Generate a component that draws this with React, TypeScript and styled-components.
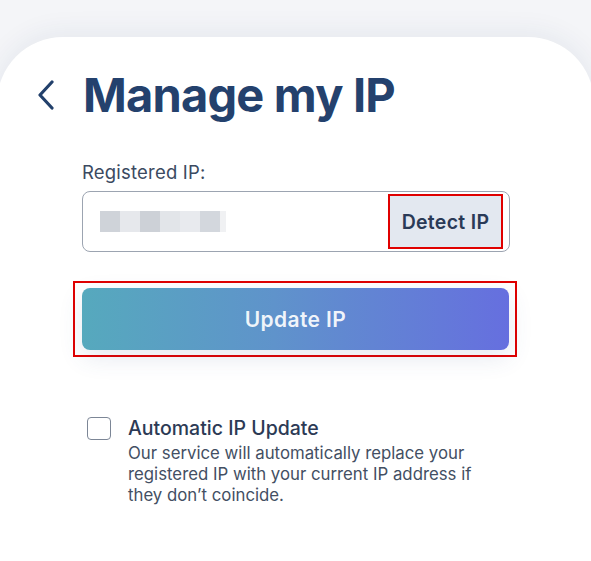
import styled, { createGlobalStyle } from "styled-components";

const GlobalStyle = createGlobalStyle`
  html, body {
    margin: 0;
    padding: 0;
    background: #f4f5f8;
    font-family: Inter, "Noto Sans", "Liberation Sans", sans-serif;
    overflow: hidden;
  }
  * {
    box-sizing: border-box;
  }
`;

const App = () => {
  return (
    <>
      <GlobalStyle />
      <Card>
        <Header>
          <BackButton aria-label="back">
            <svg width="18" height="30" viewBox="0 0 18 30" fill="none">
              <path d="M15 2 L3 15 L15 28" stroke="#22406b" strokeWidth="3.2" strokeLinecap="round" strokeLinejoin="round" />
            </svg>
          </BackButton>
          <Title>Manage my IP</Title>
        </Header>

        <Content>
          <Label>Registered IP:</Label>
          <InputBox>
            <Blurred>
              <Pixel shade="#cfd3d9" />
              <Pixel shade="#e6e8ec" />
              <Pixel shade="#cdd1d7" />
              <Pixel shade="#e2e5e9" />
              <Pixel shade="#e8eaee" />
              <Pixel shade="#d3d7dd" />
              <Pixel shade="#f0f1f3" small />
            </Blurred>
            <DetectButton>Detect IP</DetectButton>
          </InputBox>

          <UpdateFrame>
            <UpdateButton>Update IP</UpdateButton>
          </UpdateFrame>

          <AutoRow>
            <Checkbox />
            <AutoText>
              <AutoTitle>Automatic IP Update</AutoTitle>
              <AutoDesc>
                Our service will automatically replace your registered IP with your current IP address if they don’t coincide.
              </AutoDesc>
            </AutoText>
          </AutoRow>
        </Content>
      </Card>
    </>
  );
};

export default App;

const Card = styled.div`
  margin: 37px -3px 0;
  height: 524px;
  background: #ffffff;
  border-radius: 66px 66px 0 0;
  box-shadow: 0 -4px 28px rgba(30, 50, 100, 0.07);
  padding-top: 27px;
`;

const Header = styled.div`
  display: flex;
  align-items: center;
  gap: 28px;
  padding-left: 40px;
  height: 60px;
`;

const BackButton = styled.button`
  background: none;
  border: none;
  padding: 0;
  display: flex;
  margin-top: 2px;
`;

const Title = styled.h1`
  margin: 0;
  font-size: 47px;
  font-weight: 700;
  color: #24416d;
  letter-spacing: -0.8px;
`;

const Content = styled.div`
  display: flex;
  flex-direction: column;
  padding: 37px 0 0 85px;
  width: 513px;
`;

const Label = styled.div`
  font-size: 18.5px;
  letter-spacing: 0.2px;
  color: #3b4a61;
  margin-bottom: 8px;
  line-height: 22px;
`;

const InputBox = styled.div`
  display: flex;
  align-items: center;
  justify-content: space-between;
  height: 61px;
  border: 1.5px solid #9ca4b1;
  border-radius: 8px;
  padding: 0 6px 0 17px;
`;

const Blurred = styled.div`
  display: flex;
  height: 21px;
  filter: blur(0.6px);
`;

const Pixel = styled.div<{ shade: string; small?: boolean }>`
  width: ${(p) => (p.small ? "6px" : "20px")};
  height: 100%;
  background: ${(p) => p.shade};
`;

const DetectButton = styled.button`
  width: 115px;
  height: 55px;
  background: #e3e8f0;
  border: 2px solid #e00000;
  font-family: inherit;
  font-size: 19.5px;
  letter-spacing: 0.3px;
  font-weight: 600;
  color: #2a3a57;
  padding: 0;
`;

const UpdateFrame = styled.div`
  display: flex;
  margin: 29px 0 0 -9px;
  width: 444px;
  padding: 5px 6px 5px 7px;
  border: 2px solid #e00000;
`;

const UpdateButton = styled.button`
  flex: 1;
  height: 62px;
  border: none;
  border-radius: 8px;
  background: linear-gradient(90deg, #56a9bd 0%, #5f93cb 45%, #666fdf 100%);
  color: rgba(255, 255, 255, 0.92);
  font-family: inherit;
  font-size: 21px;
  letter-spacing: 0.4px;
  font-weight: 600;
  box-shadow: 0 8px 24px rgba(60, 80, 140, 0.12);
`;

const AutoRow = styled.div`
  display: flex;
  align-items: flex-start;
  gap: 17px;
  margin-top: 60px;
  margin-left: 5px;
`;

const Checkbox = styled.div`
  width: 24px;
  height: 23px;
  flex-shrink: 0;
  border: 1.5px solid #7c8696;
  border-radius: 4px;
`;

const AutoText = styled.div`
  display: flex;
  flex-direction: column;
  width: 370px;
  margin-top: -1px;
`;

const AutoTitle = styled.div`
  font-size: 19.5px;
  font-weight: 500;
  color: #2c3a55;
  line-height: 24px;
  margin-bottom: 3px;
`;

const AutoDesc = styled.div`
  font-size: 16.8px;
  color: #434f63;
  line-height: 21px;
`;
